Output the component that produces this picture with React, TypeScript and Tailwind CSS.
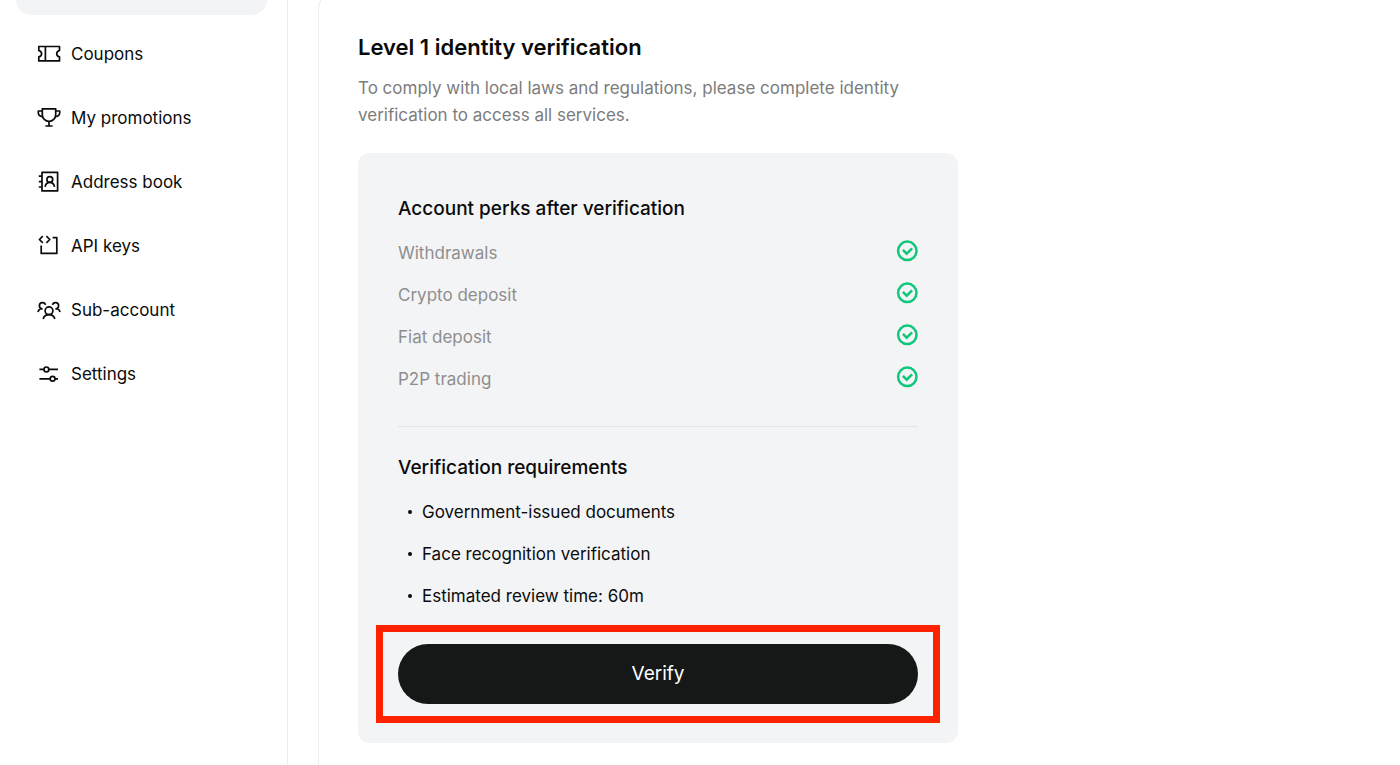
import React from "react";

type IconProps = { children: React.ReactNode };

function NavIcon({ children }: IconProps) {
  return (
    <svg
      viewBox="0 0 24 24"
      className="h-6 w-6 shrink-0"
      fill="none"
      stroke="currentColor"
      strokeWidth="1.7"
      strokeLinejoin="round"
      aria-hidden="true"
    >
      {children}
    </svg>
  );
}

const navItems = [
  {
    label: "Coupons",
    icon: (
      <NavIcon>
        <path d="M1.8 4.5h20.7v4c-1.8.5-2.8 1.7-2.8 3.2s1 2.7 2.8 3.2v4H1.8v-4c1.8-.5 2.8-1.7 2.8-3.2s-1-2.7-2.8-3.2z" />
        <path d="M8.4 4.5v14.4" />
      </NavIcon>
    ),
  },
  {
    label: "My promotions",
    icon: (
      <NavIcon>
        <path d="M5.3 2.8h13.4v5.9a6.7 6.7 0 0 1-13.4 0z" />
        <path d="M5.3 5H1.3v1.8c0 2.1 1.5 3.5 4.2 3.8M18.7 5h4v1.8c0 2.1-1.5 3.5-4.2 3.8M12 15.4v4.4M8.4 20h7.2" />
      </NavIcon>
    ),
  },
  {
    label: "Address book",
    icon: (
      <NavIcon>
        <path d="M5 2.3h15.6v18.6H5zM1.8 6.2H5M1.8 11.6H5M1.8 17H5" />
        <circle cx="12.8" cy="9.5" r="2.9" />
        <path d="M8.1 16.8c.5-2.6 2.3-4.4 4.7-4.4s4.2 1.8 4.7 4.4" />
      </NavIcon>
    ),
  },
  {
    label: "API keys",
    icon: (
      <NavIcon>
        <path d="M5.8 2.2 2.4 5.5l3.4 3.3M9.4 2.2l3.4 3.3-3.4 3.3M15.6 3.6h4.2v15.8H4.2v-7.8" />
      </NavIcon>
    ),
  },
  {
    label: "Sub-account",
    icon: (
      <NavIcon>
        <circle cx="12" cy="12.8" r="3.9" />
        <path d="M6.2 21c.6-2.6 2.8-4.4 5.8-4.4s5.2 1.8 5.8 4.4" />
        <path d="M8.5 6.9A3.1 3.1 0 1 0 5.6 10.8M4.4 10.3c-1.8.6-3 1.9-3.5 3.6M15.5 6.9a3.1 3.1 0 1 1 2.9 3.9M19.6 10.3c1.8.6 3 1.9 3.5 3.6" />
      </NavIcon>
    ),
  },
  {
    label: "Settings",
    icon: (
      <NavIcon>
        <path d="M2.4 7.4h4.4M12 7.4h9M2.4 16.8H13M18.2 16.8H21" />
        <circle cx="9.4" cy="7.4" r="2.4" />
        <circle cx="15.6" cy="16.8" r="2.4" />
      </NavIcon>
    ),
  },
];

const perks = ["Withdrawals", "Crypto deposit", "Fiat deposit", "P2P trading"];

const requirements = [
  "Government-issued documents",
  "Face recognition verification",
  "Estimated review time: 60m",
];

function CheckIcon() {
  return (
    <svg
      viewBox="0 0 22 22"
      className="h-[22px] w-[22px] shrink-0"
      fill="none"
      stroke="#0fc77a"
      strokeWidth="2.5"
      aria-hidden="true"
    >
      <circle cx="11.3" cy="10.8" r="9.2" />
      <path d="m6.9 9.9 3.8 3.8 5.4-5.4" />
    </svg>
  );
}

function Sidebar() {
  return (
    <aside className="w-72 shrink-0 border-r border-[#ececec]">
      {/* Bottom edge of the selected item */}
      <div className="ml-4 mr-5 h-[15px] rounded-b-3xl bg-[#f3f4f6]" />
      <nav className="mt-[7px]">
        {navItems.map((item) => (
          <a
            key={item.label}
            href="#"
            className="flex h-16 items-center gap-2.5 pl-[37px] text-[17px] leading-6"
          >
            {item.icon}
            {item.label}
          </a>
        ))}
      </nav>
    </aside>
  );
}

export default function App() {
  return (
    <div className="flex min-h-screen overflow-hidden bg-white font-['Inter',sans-serif] text-[#0b0b0b]">
      <Sidebar />

      <main className="-mt-3.5 ml-[30px] flex-1 rounded-tl-3xl border-l border-t border-[#ececec] pl-[39px] pr-6 pt-11">
        <div className="max-w-[600px]">
          <h1 className="text-[22px] font-semibold leading-8">
            Level 1 identity verification
          </h1>
          <p className="mt-3 text-[17px] leading-[27px] text-[#7c7c7c]">
            To comply with local laws and regulations, please complete identity
            verification to access all services.
          </p>

          <section className="mt-6 rounded-xl bg-[#f3f4f6] px-10 pb-5 pt-[42px]">
            <h2 className="text-[19px] font-medium leading-7">
              Account perks after verification
            </h2>
            <ul className="mt-[17px] space-y-4 border-b border-[#e3e4e6] pb-[34px]">
              {perks.map((perk) => (
                <li
                  key={perk}
                  className="flex items-start justify-between text-[17px] leading-[26px] text-[#8e8e8e]"
                >
                  {perk}
                  <CheckIcon />
                </li>
              ))}
            </ul>

            <h2 className="mt-[27px] text-[19px] font-medium leading-7">
              Verification requirements
            </h2>
            <ul className="mt-[17px] space-y-4">
              {requirements.map((requirement) => (
                <li
                  key={requirement}
                  className="flex items-center gap-2.5 pl-2.5 text-[17px] leading-[26px]"
                >
                  <span className="h-1 w-1 rounded-full bg-[#0b0b0b]" />
                  {requirement}
                </li>
              ))}
            </ul>

            <div className="-mx-[22px] mt-4 border-[7px] border-[#ff2200] px-[15px] py-3">
              <button
                type="button"
                className="h-[60px] w-full rounded-full bg-[#161817] text-[19px] text-white"
              >
                Verify
              </button>
            </div>
          </section>
        </div>
      </main>
    </div>
  );
}
